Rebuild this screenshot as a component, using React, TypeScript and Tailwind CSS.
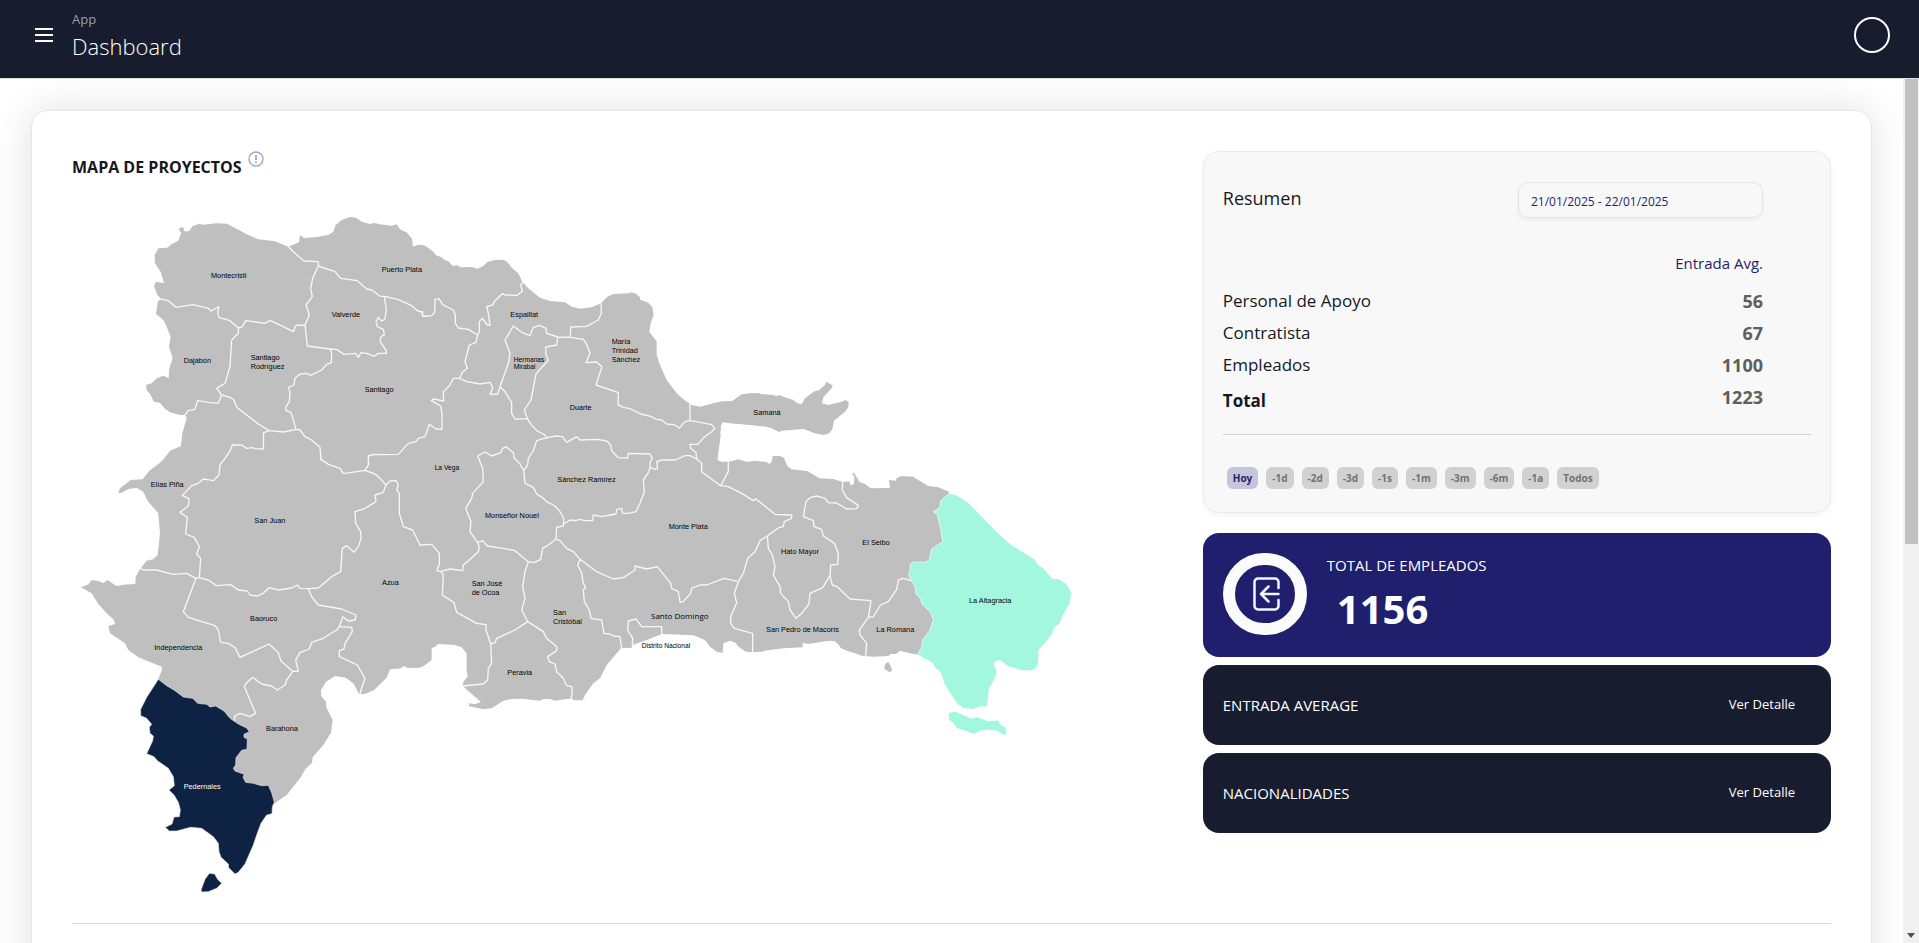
import React from "react";

type Label = { x: number; y: number; lines: string[]; size?: "sm" | "lg"; light?: boolean };
type Region = { id: string; move: string; land: string; borders: string; labels: Label[] };

const regions: Region[] = [
  {
    id: "noroeste",
    move: "translate(0 0)",
    land:
      "M1090 790 L283 780 L300 755 L333 740 L337 700 L347 665 L350 655 L345 645 L330 645 L300 637 L283 625 L270 608 L252 605 L240 582 L230 570 L228 555 L245 550 L260 535 L280 527 L296 535 L298 505 L308 475 L297 440 L302 410 L290 380 L280 360 L258 342 L264 303 L275 298 L262 285 L252 258 L258 245 L282 250 L272 215 L255 190 L254 165 L265 145 L292 143 L305 133 L325 122 L334 98 L327 90 L330 82 L341 83 L342 94 L357 94 L368 78 L388 71 L400 74 L440 70 L470 71 L500 86 L530 103 L565 118 L615 124 L655 140 L687 127 L690 105 L702 114 L740 111 L775 105 L790 95 L797 75 L815 60 L840 51 L858 53 L875 65 L900 72 L912 69 L930 73 L965 77 L980 73 L990 88 L1010 98 L1025 115 L1028 140 L1045 135 L1065 137 L1090 155 Z",
    borders:
      "M655 140 L675 160 L702 183 L745 185 L745 198 L795 215 L812 235 L862 242 L890 267 L905 270 L930 289 L945 289 L985 299 L1025 317 L1043 333 L1055 336 L1058 348 L1070 349 M745 198 L728 235 L722 265 L727 290 L708 315 L718 345 L705 375 L678 376 L670 395 L640 380 L600 361 L585 370 L550 365 L527 362 L517 380 L505 384 L480 362 L447 352 L443 338 L447 320 L423 333 L415 325 L370 314 L318 322 L295 302 L275 298 M705 375 L712 438 L780 447 L785 458 L784 488 L770 493 L755 510 L722 526 L710 520 L690 522 L675 535 L672 555 L655 562 L660 575 L658 605 L648 620 L648 632 L663 637 L678 688 M780 447 L800 448 L822 463 L857 460 L865 472 L873 458 L890 460 L913 469 L925 460 L949 460 L948 450 L930 425 L933 410 L943 404 L940 388 L922 380 L918 365 L925 352 L935 363 L944 358 L949 330 L943 289 M505 384 L505 400 L485 420 L480 500 L465 550 L440 565 L455 585 L445 609 L420 608 L383 602 L375 628 L355 632 L345 645 M455 585 L480 592 L492 600 L500 622 L565 672 L598 692 L640 696 L678 688 L690 690 L705 710 L725 720 L750 742 L753 780 M598 692 L581 698 L580 747 L555 746 L548 743 L530 745 L515 735 L487 735 L480 753 L465 775",
    labels: [
      { x: 423, y: 233, lines: ["Montecristi"] },
      { x: 935, y: 217, lines: ["Puerto Plata"] },
      { x: 785, y: 351, lines: ["Valverde"] },
      { x: 341, y: 490, lines: ["Dajabón"] },
      { x: 542, y: 479, lines: ["Santiago", "Rodríguez"] },
      { x: 884, y: 577, lines: ["Santiago"] },
    ],
  },
  {
    id: "norte",
    move: "translate(990 0)",
    land:
      "M-10 790 L-10 90 L0 90 L20 97 L37 120 L38 140 L60 134 L75 137 L95 152 L110 167 L122 170 L135 180 L145 184 L158 198 L172 196 L182 202 L215 201 L233 206 L250 198 L262 186 L285 180 L310 179 L322 186 L335 203 L355 220 L368 247 L385 265 L420 293 L450 303 L495 307 L515 320 L540 326 L575 322 L603 310 L622 290 L640 282 L685 280 L695 277 L708 281 L720 292 L720 299 L745 308 L757 322 L761 345 L752 370 L750 382 L748 395 L770 424 L770 465 L780 495 L800 540 L830 580 L850 598 L875 615 L900 620 L930 613 L960 605 L997 603 L1025 585 L1050 580 L1080 580 L1090 680 L1080 678 L1010 671 L968 666 L960 680 L958 705 L955 740 L950 780 L950 790 Z",
    borders:
      "M68 335 L68 349 L95 347 L104 337 L105 298 L117 296 L128 314 L160 330 L166 345 L166 370 L175 384 L205 388 L233 405 M368 247 L362 255 L367 273 L352 286 L315 285 L307 281 L285 302 L278 315 L260 320 L265 340 L270 375 L262 375 L247 355 L238 365 L238 395 L233 405 L228 427 L208 435 L195 485 L202 505 L187 517 L179 535 L160 535 L150 555 L130 575 L131 603 L100 597 L94 602 L122 618 L126 640 L126 688 L108 687 L88 673 L75 710 L55 715 L48 725 L25 730 L-5 763 L-50 764 L-80 763 L-95 768 L-95 790 M603 310 L604 340 L595 360 L560 379 L512 381 L511 412 L473 411 L440 400 L438 385 L420 376 L400 382 L390 407 L365 397 L340 378 L315 420 L330 460 L325 490 L300 560 M179 535 L200 545 L240 552 L270 547 L278 562 L271 583 L293 582 L300 560 L315 575 L335 608 L335 640 L345 657 L382 656 M473 411 L470 435 L437 441 L438 465 L445 480 L408 522 L393 600 L373 630 L382 656 L393 673 L410 692 L435 705 L440 715 M511 412 L550 418 L558 430 L570 460 L558 488 L590 486 L606 500 L588 555 L655 578 L654 614 L670 622 L690 626 L722 642 L755 650 L768 658 L785 660 L800 672 L822 674 L838 684 L855 665 L870 662 L905 668 L935 674 L945 685 L935 695 L912 712 L893 733 L870 733 L872 745 L888 758 L890 778 M870 662 L870 612",
    labels: [
      { x: 331, y: 351, lines: ["Espaillat"] },
      { x: 635, y: 431, lines: ["María", "Trinidad", "Sánchez"] },
      { x: 341, y: 485, lines: ["Hermanas", "Mirabal"], size: "sm" },
      { x: 509, y: 629, lines: ["Duarte"] },
    ],
  },
  {
    id: "noreste",
    move: "translate(1890 240)",
    land:
      "M-10 385 L0 382 L60 365 L98 363 L125 343 L160 340 L220 345 L228 348 L238 345 L250 350 L280 360 L292 370 L305 373 L315 355 L343 334 L357 331 L375 315 L378 305 L398 316 L396 323 L370 352 L366 370 L385 375 L420 367 L438 360 L446 367 L445 382 L435 395 L402 422 L397 448 L388 460 L370 465 L345 460 L310 447 L245 452 L237 456 L215 445 L190 438 L140 433 L90 430 L68 425 L62 440 L60 458 L62 465 L55 520 L52 540 L65 546 L90 545 L115 538 L140 546 L165 542 L185 545 L198 545 L208 552 L215 545 L218 528 L240 528 L252 534 L262 558 L275 568 L322 573 L358 595 L400 597 L428 606 L447 604 L453 617 L462 610 L463 590 L456 582 L462 578 L478 605 L495 612 L512 625 L570 624 L567 600 L588 602 L590 594 L605 588 L638 590 L660 603 L685 618 L715 622 L747 635 L735 790 L-10 790 Z",
    borders: "",
    labels: [{ x: 160, y: 406, lines: ["Samaná"] }],
  },
  {
    id: "oeste",
    move: "translate(0 690)",
    land:
      "M342 -10 L342 0 L333 48 L300 62 L283 85 L270 98 L238 122 L218 148 L182 150 L150 175 L145 190 L155 188 L175 177 L200 173 L220 185 L233 213 L265 250 L270 310 L263 375 L250 388 L230 392 L212 415 L197 440 L196 462 L160 464 L140 468 L130 462 L112 450 L100 460 L85 453 L65 450 L55 463 L33 472 L65 490 L85 522 L110 550 L132 570 L135 582 L115 588 L120 610 L165 640 L175 660 L205 682 L275 710 L277 718 L265 750 L310 790 L753 790 L753 780 L768 755 L795 738 L825 742 L850 758 L865 780 L910 781 L950 742 L960 718 L993 715 L1003 706 L1010 713 L1045 713 L1065 705 L1085 690 L1085 -10 Z",
    borders:
      "M753 88 L775 103 L810 115 L820 131 L885 121 L895 105 L897 98 M885 121 L915 132 L930 145 L948 165 M465 85 L450 105 L447 135 L430 152 L400 147 L385 160 L365 167 L337 197 L357 206 L355 228 L330 247 L352 262 L347 312 L373 322 L388 350 L380 372 L392 385 L388 443 M212 415 L220 420 L260 420 L310 433 L350 430 L378 445 L388 443 L415 450 L440 467 L482 464 L505 480 L532 483 L540 495 L562 498 L580 490 L597 473 L625 480 L665 474 L682 465 L690 475 L715 476 L745 474 L785 440 L812 425 L817 355 L830 347 L852 367 L865 350 L873 325 L872 305 L857 280 L855 245 L885 235 L918 215 L915 195 L940 187 L948 165 L960 153 L978 152 L985 165 L980 180 L988 190 L988 250 L1000 290 L1028 300 L1050 345 M378 445 L340 545 L355 562 L435 587 L445 600 L452 637 L475 640 L495 653 L510 682 L597 642 L625 668 L633 693 L668 724 L685 724 L677 690 L690 668 L718 657 L725 637 L760 625 L775 615 L800 600 L808 590 L818 560 L835 573 L855 570 L858 555 L815 537 L745 525 L725 500 L715 476 M808 590 L845 592 L847 605 L825 640 L822 657 L808 662 L808 680 L862 705 L885 745 L873 780 L870 792",
    labels: [
      { x: 242, y: 171, lines: ["Elías Piña"] },
      { x: 553, y: 279, lines: ["San Juan"] },
      { x: 936, y: 466, lines: ["Azua"] },
      { x: 540, y: 572, lines: ["Baoruco"] },
      { x: 253, y: 659, lines: ["Independencia"] },
    ],
  },
  {
    id: "centro",
    move: "translate(990 690)",
    land:
      "M-10 -10 L-10 716 L0 714 L15 708 L30 713 L65 712 L85 695 L92 680 L90 657 L105 650 L115 642 L165 645 L185 652 L200 670 L200 720 L203 740 L190 755 L188 768 L215 792 L243 816 L225 823 L208 820 L206 828 L250 838 L275 835 L310 812 L335 807 L365 806 L420 812 L430 807 L450 807 L465 812 L500 807 L515 806 L523 811 L548 811 L555 795 L580 760 L600 745 L620 705 L663 655 L695 653 L697 645 L740 630 L785 612 L880 616 L915 630 L930 650 L950 665 L968 668 L970 640 L990 632 L1015 642 L1035 660 L1045 665 L1090 665 L1090 95 L985 95 L960 95 L950 88 L957 40 L962 0 L962 -10 Z",
    borders:
      "M440 23 L470 18 L487 20 L500 37 L530 20 L540 30 L590 28 L620 33 L632 45 L635 62 L655 83 L683 84 L685 70 L750 72 L757 85 L750 98 L750 112 L765 118 L773 115 L770 95 L785 90 L825 90 L855 77 L870 77 L890 87 L905 100 L905 125 L962 167 L985 125 L985 95 M962 167 L985 170 L1020 187 L1060 212 L1068 207 M440 23 L410 32 L400 62 L385 85 L383 105 L371 122 L375 160 L400 172 L410 192 L430 205 L440 215 L465 228 L480 245 L491 265 L490 288 L470 292 L468 327 M371 122 L360 102 L343 85 L340 68 L318 50 L308 55 L302 68 L275 78 L255 66 L233 78 L248 115 L250 155 L218 190 L215 205 L197 235 L213 275 L210 305 L233 338 L248 332 L262 348 L310 355 L345 362 L385 395 L403 398 L422 388 L428 355 L445 345 L468 327 L480 332 L500 355 L520 365 L540 388 M233 338 L238 350 L235 365 L200 397 L190 405 L188 422 L150 417 L122 424 L110 422 L118 405 L118 370 L95 343 L60 345 M750 112 L745 128 L730 150 L733 185 L720 220 L708 245 L685 250 L668 250 L665 236 L650 238 L648 252 L630 255 L605 260 L580 255 L578 272 L555 272 L540 268 L525 272 L510 270 L490 283 M540 388 L590 425 L640 447 L670 443 L705 420 L705 408 L740 417 L772 410 L812 460 L815 475 L835 485 L840 516 L850 515 L872 490 L875 475 L900 465 L920 465 L972 445 L1015 455 M1102 318 L1080 332 L1065 365 L1043 385 L1030 430 L1015 455 L1003 490 L1010 518 L992 560 L992 580 L1003 595 L1058 610 L1058 665 M540 388 L533 405 L545 430 L550 460 L557 472 L550 480 L553 515 L568 540 L573 565 L605 570 L612 610 L630 612 L640 618 L660 620 L665 655 M385 395 L375 425 L368 470 L375 505 L365 540 L383 575 L345 600 L290 625 L285 638 L272 642 L275 700 L265 715 L263 750 L250 762 L188 768 M122 424 L130 435 L127 495 L162 518 L170 547 L230 580 L258 584 L258 600 L272 642 M383 575 L430 605 L440 625 L470 650 L470 662 L443 680 L448 695 L465 702 L470 725 L490 745 L500 767 L515 770 L517 790 L513 807 M697 645 L698 625 L683 600 L685 573 L708 567 L725 590 L785 590 L785 612",
    labels: [
      { x: 104, y: 121, lines: ["La Vega"], size: "sm" },
      { x: 472, y: 155, lines: ["Sánchez Ramírez"] },
      { x: 255, y: 263, lines: ["Monseñor Nouel"] },
      { x: 806, y: 298, lines: ["Monte Plata"] },
      { x: 215, y: 467, lines: ["San José", "de Ocoa"] },
      { x: 459, y: 556, lines: ["San", "Cristóbal"] },
      { x: 753, y: 568, lines: ["Santo Domingo"], size: "lg" },
      { x: 725, y: 655, lines: ["Distrito Nacional"], size: "sm" },
      { x: 322, y: 736, lines: ["Peravia"] },
    ],
  },
  {
    id: "este",
    move: "translate(2010 690)",
    land:
      "M-10 250 L600 250 L600 500 L575 560 L585 570 L560 660 L533 674 L510 670 L480 662 L468 672 L452 672 L445 678 L400 680 L365 677 L345 670 L325 664 L303 655 L295 643 L283 633 L262 633 L205 642 L188 638 L188 652 L130 655 L42 666 L18 665 L0 653 L-10 645 Z M437 700 L445 696 L452 708 L457 722 L447 726 L432 715 Z",
    borders:
      "M40 212 L48 207 L105 253 L155 255 L155 265 L133 275 L130 290 L118 292 L82 318 L85 355 L97 375 L105 410 L100 435 L120 470 L122 490 L145 515 L150 540 L168 565 L185 550 L207 522 L210 490 L248 473 L270 437 L272 405 L293 403 L295 370 L283 340 L250 318 L245 298 L222 290 L220 272 L190 260 L198 215 L210 203 L230 198 L255 205 L265 218 L290 219 L320 237 L350 236 L355 226 L320 203 L307 180 L308 157 M270 437 L277 465 L292 470 L330 507 L393 512 L385 562 L358 600 L360 615 L380 640 L377 677 M385 562 L400 560 L422 525 L445 515 L470 478 L475 450 L490 445 L512 452",
    labels: [
      { x: 123, y: 371, lines: ["Hato Mayor"] },
      { x: 367, y: 344, lines: ["El Seibo"] },
      { x: 78, y: 607, lines: ["San Pedro de Macorís"] },
      { x: 409, y: 607, lines: ["La Romana"] },
    ],
  },
  {
    id: "suroeste",
    move: "translate(0 1320)",
    land:
      "M270 60 L277 88 L265 118 L400 240 L440 480 L600 495 L617 488 L650 465 L690 415 L708 385 L726 368 L728 352 L760 315 L783 278 L788 240 L770 205 L768 185 L753 168 L753 148 L768 122 L795 107 L825 112 L850 130 L865 158 L868 162 L885 162 L912 150 L948 115 L960 88 L960 60 Z",
    borders:
      "M668 95 L650 120 L645 135 L622 150 L605 138 L575 132 L548 112 L530 128 L523 140 L557 220 L540 230 L510 220 L495 228 L492 243",
    labels: [{ x: 588, y: 272, lines: ["Barahona"] }],
  },
];

const altagracia =
  "M627 190 L650 195 L685 218 L780 315 L815 345 L885 388 L893 403 L910 415 L937 445 L958 447 L980 462 L995 488 L990 520 L970 555 L958 583 L945 590 L935 615 L897 660 L895 700 L888 715 L872 722 L848 722 L805 710 L782 692 L765 694 L762 705 L770 720 L768 740 L748 775 L742 825 L738 831 L720 830 L700 838 L670 835 L653 823 L630 790 L612 760 L605 735 L597 722 L585 715 L578 700 L533 674 L545 650 L548 630 L570 600 L580 568 L570 545 L548 525 L540 505 L528 492 L525 470 L512 448 L505 432 L510 425 L510 403 L522 396 L555 397 L568 390 L575 357 L608 335 L603 300 L598 280 L592 255 L580 245 L600 232 L602 213 Z M625 848 L645 844 L665 852 L695 865 L712 861 L745 873 L775 870 L782 883 L800 895 L798 917 L785 912 L770 903 L740 900 L722 903 L702 912 L650 895 L640 880 L627 870 Z";

const pedernales =
  "M265 118 L290 137 L315 152 L340 171 L368 175 L383 190 L410 193 L420 201 L437 198 L462 213 L480 235 L505 252 L530 264 L538 275 L522 283 L522 292 L532 297 L531 328 L515 331 L498 353 L497 375 L490 385 L495 393 L523 403 L519 412 L527 427 L550 430 L575 437 L595 436 L605 458 L613 487 L607 500 L606 521 L590 525 L573 550 L560 585 L550 615 L525 672 L505 697 L495 702 L476 683 L475 672 L453 652 L447 635 L445 610 L430 590 L395 565 L362 562 L320 573 L298 573 L286 562 L306 552 L312 531 L328 530 L331 510 L325 487 L312 465 L297 450 L313 437 L310 410 L295 385 L262 362 L252 350 L230 341 L248 302 L250 288 L240 280 L238 262 L245 253 L230 235 L212 227 L212 208 L230 172 Z M418 700 L434 702 L443 718 L455 730 L440 745 L415 755 L396 756 L393 750 L405 718 Z";

function MapLabel({ label }: { label: Label }) {
  const font =
    label.size === "sm"
      ? "font-['Liberation_Sans',sans-serif] text-[20px]"
      : label.size === "lg"
        ? "font-['Open_Sans',sans-serif] text-[24px]"
        : "font-['Liberation_Sans',sans-serif] text-[22px]";
  return (
    <text className={`${font} ${label.light ? "fill-white" : "fill-black"}`} x={label.x} y={label.y}>
      {label.lines.map((line, i) => (
        <tspan key={line} x={label.x} dy={i === 0 ? 0 : label.size === "sm" ? 22 : 27}>
          {line}
        </tspan>
      ))}
    </text>
  );
}

function ProjectMap() {
  return (
    <svg viewBox="6 0 3024 2160" className="block w-full max-w-[1008px]" role="img" aria-label="Mapa de proyectos">
      {regions.map((r) => (
        <path key={r.id} transform={r.move} d={r.land} className="fill-[#bfbfbf]" />
      ))}
      {regions.map((r) => (
        <path
          key={r.id}
          transform={r.move}
          d={r.borders}
          className="fill-none stroke-[#f7f7f7] stroke-[4]"
          strokeLinejoin="round"
          strokeLinecap="round"
        />
      ))}
      <path transform="translate(2010 690)" d={altagracia} className="fill-[#a3f7dd] stroke-white stroke-[2]" />
      <path transform="translate(0 1320)" d={pedernales} className="fill-[#0e2243] stroke-[#dfe3ea] stroke-[2]" />
      {regions.map((r) => (
        <g key={r.id} transform={r.move}>
          {r.labels.map((l) => (
            <MapLabel key={l.lines[0] + l.y} label={l} />
          ))}
        </g>
      ))}
      <MapLabel label={{ x: 2697, y: 1209, lines: ["La Altagracia"] }} />
      <MapLabel label={{ x: 341, y: 1768, lines: ["Pedernales"], light: true }} />
    </svg>
  );
}

const rows = [
  { name: "Personal de Apoyo", value: 56 },
  { name: "Contratista", value: 67 },
  { name: "Empleados", value: 1100 },
];

const ranges = ["Hoy", "-1d", "-2d", "-3d", "-1s", "-1m", "-3m", "-6m", "-1a", "Todos"];

function Summary() {
  return (
    <section className="rounded-2xl border border-[#ebebeb] bg-[#f8f8f8] px-[19px] pt-[30px] pb-[23px] shadow-[0_2px_6px_rgba(0,0,0,0.05)]">
      <div className="flex items-center justify-between pr-12">
        <h2 className="pb-1 text-[18px] text-[#16181d]">Resumen</h2>
        <input
          type="text"
          aria-label="Rango de fechas"
          defaultValue="21/01/2025 - 22/01/2025"
          className="h-9 w-[245px] rounded-[10px] border border-[#e4e4e4] bg-[#f8f8f8] px-3 pt-[2px] text-[12px] text-[#1f1f6d] shadow-[0_2px_4px_rgba(0,0,0,0.05)] outline-none"
        />
      </div>
      <table className="mt-8 w-full text-[17px] text-[#16181d]">
        <thead>
          <tr className="h-[26px]">
            <td />
            <th className="pr-12 text-right text-[15px] font-normal text-[#1f1f6d]">Entrada Avg.</th>
          </tr>
          <tr className="h-[9px]" />
        </thead>
        <tbody>
          {rows.map((r) => (
            <tr key={r.name} className="h-8">
              <td>{r.name}</td>
              <td className="pr-12 text-right text-[18px] font-bold text-[#5e5e5e]">{r.value}</td>
            </tr>
          ))}
          <tr className="h-8">
            <td className="pt-2 align-top leading-6 font-bold">Total</td>
            <td className="pr-12 text-right text-[18px] font-bold text-[#5e5e5e]">1223</td>
          </tr>
        </tbody>
      </table>
      <div className="mt-[21px] border-t border-[#d2d2d2]" />
      <div className="mt-8 flex gap-2 px-1">
        {ranges.map((r) => (
          <button
            key={r}
            type="button"
            className={`h-[22px] rounded-md px-[6px] text-[10px] font-bold ${
              r === "Hoy" ? "bg-[#c5c5dc] text-[#1f1f6d]" : "bg-[#d1d1d1] text-[#717171]"
            }`}
          >
            {r}
          </button>
        ))}
      </div>
    </section>
  );
}

function EntryIcon() {
  return (
    <svg
      viewBox="0 0 27 34"
      className="ml-1 h-[34px] w-[27px] fill-none stroke-[#f4f4fa] stroke-[2.5]"
      strokeLinecap="round"
      strokeLinejoin="round"
      aria-hidden="true"
    >
      <path d="M25.5 11V5a3.5 3.5 0 0 0-3.5-3.5H5A3.5 3.5 0 0 0 1.500 5v24a3.500 3.500 0 0 0 3.500 3.500h17a3.500 3.500 0 0 0 3.500-3.500v-6" />
      <path d="M25.500 17H8M15.500 9.500L8 17l7.500 7.500" />
    </svg>
  );
}

function DetailCard({ title }: { title: string }) {
  return (
    <div className="flex h-20 items-center justify-between rounded-2xl bg-[#171d2f] pr-9 pl-5 text-white">
      <h3 className="text-[15px]">{title}</h3>
      <button type="button" className="text-[13px]">
        Ver Detalle
      </button>
    </div>
  );
}

export default function App() {
  return (
    <div className="flex h-screen flex-col overflow-hidden bg-white font-['Open_Sans','Noto_Sans',sans-serif]">
      <header className="flex h-[79px] shrink-0 items-start justify-between border-b border-[#dfe1e6] bg-[#171d2f] pr-[29px] pl-[35px]">
        <div className="flex items-start">
          <button type="button" aria-label="Abrir menú" className="mt-7 flex w-[18px] flex-col gap-1">
            <span className="h-[2px] bg-white" />
            <span className="h-[2px] bg-white" />
            <span className="h-[2px] bg-white" />
          </button>
          <div className="ml-[19px] pt-2">
            <p className="text-[13px] leading-[22px] text-[#9b9da6]">App</p>
            <h1 className="text-[22px] leading-8 font-light text-white">Dashboard</h1>
          </div>
        </div>
        <button type="button" aria-label="Cuenta" className="mt-[17px] size-9 rounded-full border-2 border-white" />
      </header>

      <div className="flex min-h-0 flex-1">
        <main className="min-w-0 flex-1 overflow-hidden px-[31px] pt-[31px]">
          <div className="rounded-2xl border border-[#e6e6e6] px-10 pt-10 pb-20 shadow-[0_0_40px_rgba(0,0,0,0.12)]">
            <div className="grid grid-cols-[9fr_5fr] border-b border-[#dcdcdc] pb-[3px]">
              <section>
                <div className="flex h-[49px] items-start gap-[6px]">
                  <h2 className="pt-1 text-[16px] leading-6 font-bold text-[#16181d]">MAPA DE PROYECTOS</h2>
                  <svg viewBox="0 0 16 16" className="size-4 fill-none stroke-[#9aa6c2]" aria-hidden="true">
                    <circle cx="8" cy="8" r="7" strokeWidth="1.3" />
                    <path d="M8 4v5M8 10.600v1.600" strokeWidth="1.7" />
                  </svg>
                </div>
                <ProjectMap />
              </section>

              <aside>
                <Summary />
                <div className="mt-5 flex h-[124px] rounded-2xl bg-[#1f1f6d] py-5 pl-5 text-white">
                  <div className="flex h-[82px] w-[84px] items-center justify-center rounded-full border-[12px] border-[#fbfbfb]">
                    <EntryIcon />
                  </div>
                  <div className="ml-5">
                    <h3 className="text-[15px] leading-6">TOTAL DE EMPLEADOS</h3>
                    <p className="pt-2 pl-[10px] text-[40px] leading-[48px] font-bold">1156</p>
                  </div>
                </div>
                <div className="mt-2 flex flex-col gap-2">
                  <DetailCard title="ENTRADA AVERAGE" />
                  <DetailCard title="NACIONALIDADES" />
                </div>
              </aside>
            </div>
          </div>
        </main>
        <div aria-hidden="true" className="flex w-4 flex-col items-center justify-between bg-[#f1f1f1]">
          <div className="h-[465px] w-[13px] bg-[#c1c1c1]" />
          <svg viewBox="0 0 8 5" className="mb-[5px] h-[5px] w-2 fill-[#505050]">
            <path d="M0 0h8L4 5z" />
          </svg>
        </div>
      </div>
    </div>
  );
}
